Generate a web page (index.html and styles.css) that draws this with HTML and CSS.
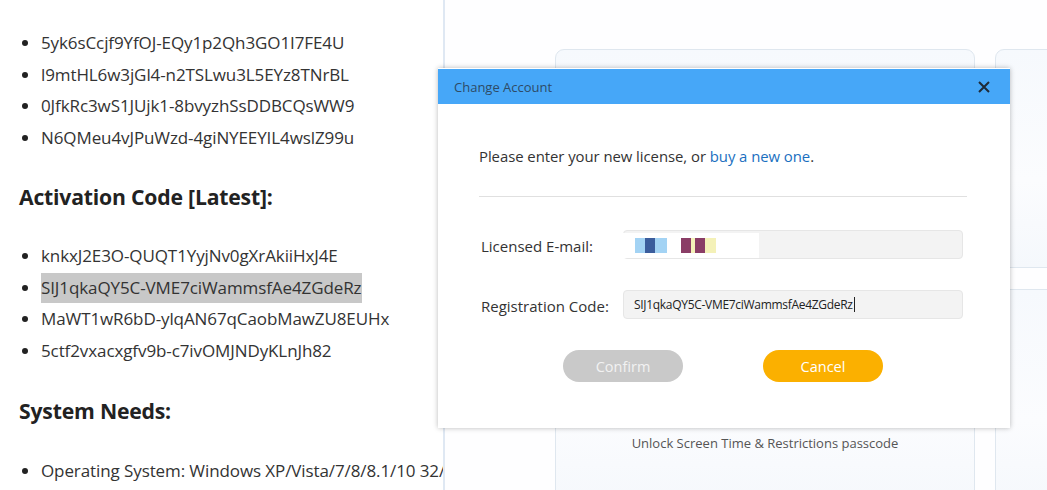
FILE: index.html
```html
<!DOCTYPE html>
<html>
<head>
<meta charset="utf-8">
<link rel="stylesheet" href="styles.css">
</head>
<body>
<div class="page">
  <div class="article">
    <ul class="codes first">
      <li>5yk6sCcjf9YfOJ-EQy1p2Qh3GO1I7FE4U</li>
      <li>l9mtHL6w3jGl4-n2TSLwu3L5EYz8TNrBL</li>
      <li>0JfkRc3wS1JUjk1-8bvyzhSsDDBCQsWW9</li>
      <li>N6QMeu4vJPuWzd-4giNYEEYIL4wslZ99u</li>
    </ul>
    <h2 class="h-act">Activation Code [Latest]:</h2>
    <ul class="codes">
      <li>knkxJ2E3O-QUQT1YyjNv0gXrAkiiHxJ4E</li>
      <li><span class="sel">SIJ1qkaQY5C-VME7ciWammsfAe4ZGdeRz</span></li>
      <li>MaWT1wR6bD-ylqAN67qCaobMawZU8EUHx</li>
      <li>5ctf2vxacxgfv9b-c7ivOMJNDyKLnJh82</li>
    </ul>
    <h2 class="h-sys">System Needs:</h2>
    <ul class="codes">
      <li>Operating System: Windows XP/Vista/7/8/8.1/10 32/64 bit</li>
    </ul>
  </div>
  <div class="app">
    <div class="cards">
      <div class="card"></div>
      <div class="card"></div>
      <div class="card"><p class="card-text">Unlock Screen Time &amp; Restrictions passcode</p></div>
      <div class="card"></div>
    </div>
  </div>
</div>

<div class="dialog">
  <div class="dlg-head">
    <span class="dlg-title">Change Account</span>
    <svg class="dlg-close" width="14" height="14" viewBox="0 0 14 14"><path d="M2 2 L12 12 M12 2 L2 12" stroke="#1f2b38" stroke-width="2" fill="none"/></svg>
  </div>
  <div class="dlg-body">
    <p class="intro">Please enter your new license, or <a class="buy">buy a new one</a>.</p>
    <div class="rule"></div>
    <div class="row">
      <label>Licensed E-mail:</label>
      <div class="field">
        <div class="blur">
          <span class="px w" style="width:12px"></span>
          <span class="px lb" style="width:10px"></span>
          <span class="px db" style="width:10px"></span>
          <span class="px lb" style="width:12px"></span>
          <span class="px w" style="width:14px"></span>
          <span class="px pu" style="width:10px"></span>
          <span class="px ly" style="width:4px"></span>
          <span class="px pu" style="width:10px"></span>
          <span class="px ly" style="width:11px"></span>
          <span class="px w" style="width:26px"></span>
        </div>
      </div>
    </div>
    <div class="row">
      <label>Registration Code:</label>
      <div class="field"><span class="val">SIJ1qkaQY5C-VME7ciWammsfAe4ZGdeRz</span><span class="caret"></span></div>
    </div>
    <div class="buttons">
      <button class="btn confirm">Confirm</button>
      <button class="btn cancel">Cancel</button>
    </div>
  </div>
</div>
</body>
</html>
```
FILE: styles.css
```css
html, body {
  margin: 0;
  padding: 0;
  background: #ffffff;
  overflow: hidden;
}
.page {
  display: flex;
  width: 1047px;
  height: 490px;
}
.article {
  width: 443px;
  flex: none;
  border-right: 2px solid #dfe8f3;
  font-family: "Open Sans", "Noto Sans", sans-serif;
  color: #333;
  overflow: hidden;
}
.codes {
  list-style: none;
  margin: 0;
  padding: 0 0 0 41px;
}
.codes.first {
  margin-top: 27px;
}
.codes li {
  position: relative;
  font-size: 17px;
  line-height: 31.5px;
  height: 31.5px;
  white-space: nowrap;
  letter-spacing: -0.1px;
}
.codes li::before {
  content: "";
  position: absolute;
  left: -19px;
  top: 13px;
  width: 6px;
  height: 6px;
  border-radius: 50%;
  background: #222;
}
.sel {
  background: #c8c8c8;
  display: inline-block;
  line-height: 30px;
  padding-right: 1px;
}
h2 {
  margin: 0 0 0 19px;
  font-size: 21.2px;
  line-height: 28px;
  font-weight: 700;
  color: #222;
  letter-spacing: -0.2px;
}
.h-act {
  margin-top: 30px;
  margin-bottom: 29px;
}
.h-sys {
  margin-top: 31px;
  margin-bottom: 30px;
}
.app {
  flex: 1;
  background: #fefeff;
  padding: 49px 0 0 110px;
  overflow: hidden;
}
.cards {
  display: grid;
  grid-template-columns: 420px 420px;
  grid-template-rows: 219px 219px;
  column-gap: 20px;
  row-gap: 21px;
}
.card {
  border: 1px solid #dfe7ef;
  border-radius: 9px;
  background: linear-gradient(180deg, #f6f9fd 0%, #fbfcfe 60%, #f5f8fc 100%);
  box-sizing: border-box;
  position: relative;
}
.card-text {
  margin: 0;
  position: absolute;
  left: 0;
  right: 0;
  top: 144px;
  text-align: center;
  font-family: "Open Sans", sans-serif;
  font-size: 13px;
  color: #555;
}

/* dialog */
.dialog {
  position: absolute;
  left: 438px;
  top: 68px;
  width: 572px;
  height: 360px;
  background: #fff;
  box-shadow: 0 0 5px rgba(0,0,0,0.28);
  font-family: "Open Sans", "Noto Sans", sans-serif;
}
.dlg-head {
  height: 35px;
  margin-top: 1px;
  background: #46a7f8;
  display: flex;
  align-items: center;
  justify-content: space-between;
  padding: 0 19px 0 16px;
}
.dlg-title {
  font-size: 13px;
  color: #2e4b66;
  padding-top: 1px;
}
.dlg-close {
  display: block;
}
.dlg-body {
  padding: 42px 43px 0 41px;
}
.intro {
  margin: 0;
  font-size: 14.9px;
  line-height: 20px;
  color: #333;
  letter-spacing: -0.05px;
}
.buy {
  color: #1a6fbf;
}
.rule {
  height: 1px;
  background: #e0e0e0;
  margin: 30px 0 33px;
}
.row {
  display: flex;
  align-items: center;
  margin-bottom: 31px;
  padding-right: 4px;
}
.row label {
  width: 144px;
  box-sizing: border-box;
  padding-left: 2px;
  padding-top: 3px;
  font-size: 15px;
  color: #333;
}
.field {
  flex: 1;
  height: 29px;
  box-sizing: border-box;
  background: #f3f3f3;
  border: 1px solid #e6e6e6;
  border-radius: 4px;
  display: flex;
  align-items: center;
  padding-left: 10px;
  position: relative;
}
.blur {
  position: absolute;
  left: -1px;
  top: 2px;
  display: flex;
  height: 25px;
  background: #fff;
  width: 136px;
  align-items: center;
}
.px {
  display: block;
  height: 15px;
}
.px.w { background: #fff; }
.px.lb { background: #a3d3f4; }
.px.db { background: #3b5d9c; }
.px.pu { background: #8a3d66; }
.px.ly { background: #f4f1b8; }
.val {
  font-size: 12px;
  color: #222;
  letter-spacing: -0.3px;
}
.caret {
  display: inline-block;
  width: 1px;
  height: 15px;
  background: #222;
  margin-left: 1px;
}
.buttons {
  display: flex;
  gap: 80px;
  padding-left: 84px;
  margin-top: 5px;
}
.btn {
  width: 120px;
  height: 32px;
  border: none;
  border-radius: 16px;
  font-family: "Open Sans", sans-serif;
  font-size: 14.5px;
  color: #fff;
  padding: 0;
}
.confirm {
  background: #c9c9c9;
  color: #f2f2f2;
}
.cancel {
  background: #fbb000;
}
```
